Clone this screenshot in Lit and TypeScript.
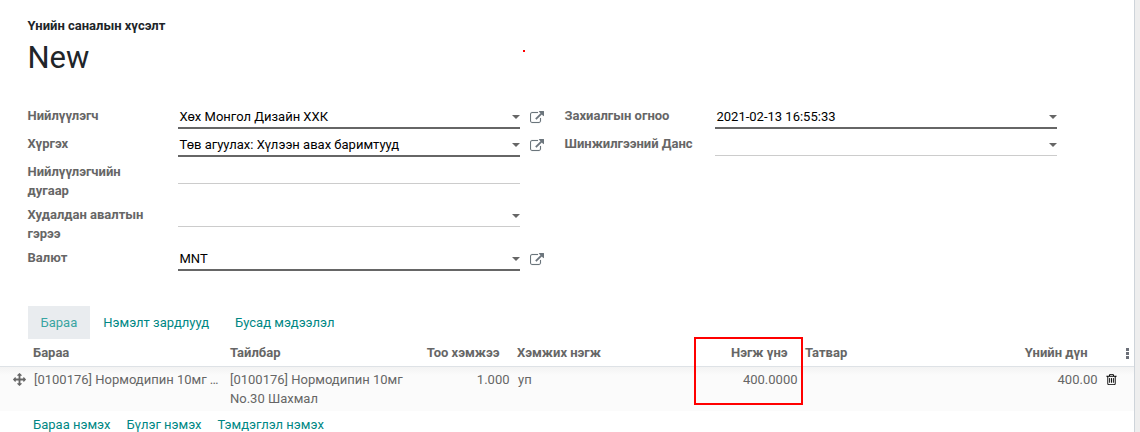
import { LitElement, html, css, svg, nothing } from "lit";
import { customElement, property } from "lit/decorators.js";

const PATHS = {
  external:
    "M1408 928v320q0 119-84.5 203.5t-203.5 84.5h-832q-119 0-203.5-84.5t-84.5-203.5v-832q0-119 84.5-203.5t203.5-84.5h704q14 0 23 9t9 23v64q0 14-9 23t-23 9h-704q-66 0-113 47t-47 113v832q0 66 47 113t113 47h832q66 0 113-47t47-113v-320q0-14 9-23t23-9h64q14 0 23 9t9 23zm384-864v512q0 26-19 45t-45 19-45-19l-176-176-652 652q-10 10-23 10t-23-10l-114-114q-10-10-10-23t10-23l652-652-176-176q-19-19-19-45t19-45 45-19h512q26 0 45 19t19 45z",
  move:
    "M1792 896q0 26-19 45l-256 256q-19 19-45 19t-45-19-19-45v-128h-384v384h128q26 0 45 19t19 45-19 45l-256 256q-19 19-45 19t-45-19l-256-256q-19-19-19-45t19-45 45-19h128v-384h-384v128q0 26-19 45t-45 19-45-19l-256-256q-19-19-19-45t19-45l256-256q19-19 45-19t45 19 19 45v128h384v-384h-128q-26 0-45-19t-19-45 19-45l256-256q19-19 45-19t45 19l256 256q19 19 19 45t-19 45-45 19h-128v384h384v-128q0-26 19-45t45-19 45 19l256 256q19 19 19 45z",
  trash:
    "M704 736v576q0 14-9 23t-23 9h-64q-14 0-23-9t-9-23v-576q0-14 9-23t23-9h64q14 0 23 9t9 23zm256 0v576q0 14-9 23t-23 9h-64q-14 0-23-9t-9-23v-576q0-14 9-23t23-9h64q14 0 23 9t9 23zm256 0v576q0 14-9 23t-23 9h-64q-14 0-23-9t-9-23v-576q0-14 9-23t23-9h64q14 0 23 9t9 23zm128 724v-948h-896v948q0 22 7 40.5t14.5 27 10.5 8.5h832q3 0 10.5-8.5t14.5-27 7-40.5zm-672-1076h448l-48-117q-7-9-17-11h-317q-10 2-17 11zm928 32v64q0 14-9 23t-23 9h-96v948q0 83-47 143.5t-113 60.5h-832q-66 0-113-58.5t-47-141.5v-952h-96q-14 0-23-9t-9-23v-64q0-14 9-23t23-9h309l70-167q15-37 54-63t79-26h320q40 0 79 26t54 63l70 167h309q14 0 23 9t9 23z",
};

const icon = (name: keyof typeof PATHS) =>
  html`<svg class=${name} viewBox="0 0 1792 1792">${svg`<path d=${PATHS[name]} />`}</svg>`;

@customElement("form-field")
class FormField extends LitElement {
  @property() label = "";
  @property() value = "";
  @property({ type: Boolean }) required = false;
  @property({ type: Boolean }) select = false;
  @property({ type: Boolean }) link = false;

  static styles = css`
    :host { display: flex; align-items: flex-start; }
    .label { width: 150.5px; padding-right: 20px; box-sizing: border-box; font-weight: 700; color: #666; line-height: 19px; }
    .input {
      display: flex; width: 342px; height: 22px; box-sizing: border-box;
      padding: 1px 0 0 1.5px; line-height: 19px; color: #000;
      border-bottom: 1px solid #ccc;
    }
    .input.required { height: 23px; border-bottom: 2px solid #666; }
    .text { flex: 1; white-space: nowrap; }
    .caret { width: 0; height: 0; margin-top: 8px; border: 4px solid transparent; border-top-color: #666; border-bottom: 0; }
    .external { width: 14px; height: 14px; margin: 5px 0 0 10px; fill: #6c757d; stroke: #6c757d; stroke-width: 16px; }
  `;

  render() {
    return html`
      <div class="label">${this.label}</div>
      <div class="input ${this.required ? "required" : ""}">
        <span class="text">${this.value}</span>
        ${this.select ? html`<span class="caret"></span>` : nothing}
      </div>
      ${this.link ? icon("external") : nothing}
    `;
  }
}

@customElement("app-root")
class AppRoot extends LitElement {
  static styles = css`
    :host {
      display: block; width: 1140px; height: 432px; overflow: hidden; position: relative;
      background: #eee; font: 13px/19px Roboto, sans-serif; color: #666;
    }
    .sheet { width: 1134px; height: 432px; background: #fff; border-right: 1px solid #ced4da; }
    .heading { height: 106px; padding: 16px 0 0 27.5px; box-sizing: border-box; color: #212529; }
    .subtitle { font-weight: 700; }
    .title { margin: 0; font-size: 31px; line-height: 46px; font-weight: 400; }
    .groups { display: flex; gap: 21px; height: 200px; padding-left: 27.5px; }
    .group { display: grid; width: 516px; align-content: start; grid-template-rows: 28px 28px 43px 43px 28px; }
    .tabs { display: flex; height: 33px; padding-left: 27.5px; }
    .tab { padding: 0 13px; line-height: 34px; color: #008784; }
    .tab.active { background: #e9ecef; color: #3aa5a2; }
    .row { display: grid; grid-template-columns: 28px 197px 187px 100px 178px 110px 200px 100px 22px 12px; }
    .head { height: 28px; box-sizing: border-box; padding-top: 4px; border-bottom: 1px solid #dee2e6; font-weight: 700; white-space: nowrap; }
    .head .cell { padding-left: 5px; }
    .head .num { padding-right: 12.5px; text-align: right; }
    .line { height: 44px; box-sizing: border-box; padding-top: 3px; background: linear-gradient(#f3f3f3, #fbfbfb 8px); }
    .line .cell { padding: 0 6px 0 6px; }
    .line .desc { padding-left: 5px; }
    .line .name { padding-right: 0; white-space: nowrap; }
    .line .num { padding-right: 2.5px; text-align: right; }
    .move { display: block; width: 13px; height: 13px; margin: 3px 0 0 13px; fill: #666; }
    .trash { display: block; width: 13px; height: 13px; margin: 3px 0 0 4.5px; fill: #000; }
    .dots { display: flex; flex-direction: column; gap: 1px; padding: 5px 0 0 3.5px; }
    .dots span { width: 3px; height: 3px; background: #6b6f78; }
    .actions { display: flex; gap: 16px; padding: 4px 0 0 33px; color: #008784; }
    .highlight { position: absolute; left: 694px; top: 337px; width: 109px; height: 68px; box-sizing: border-box; border: 2px solid #f00; }
    .mark { position: absolute; left: 523px; top: 50px; width: 2px; height: 2px; background: #f00; }
  `;

  render() {
    return html`
      <div class="sheet">
        <div class="heading">
          <div class="subtitle">Үнийн саналын хүсэлт</div>
          <h1 class="title">New</h1>
        </div>
        <div class="groups">
          <div class="group">
            <form-field label="Нийлүүлэгч" value="Хөх Монгол Дизайн ХХК" required select link></form-field>
            <form-field label="Хүргэх" value="Төв агуулах: Хүлээн авах баримтууд" required select link></form-field>
            <form-field label="Нийлүүлэгчийн дугаар"></form-field>
            <form-field label="Худалдан авалтын гэрээ" select></form-field>
            <form-field label="Валют" value="MNT" required select link></form-field>
          </div>
          <div class="group">
            <form-field label="Захиалгын огноо" value="2021-02-13 16:55:33" required select></form-field>
            <form-field label="Шинжилгээний Данс" select></form-field>
          </div>
        </div>
        <div class="tabs">
          <div class="tab active">Бараа</div>
          <div class="tab">Нэмэлт зардлууд</div>
          <div class="tab">Бусад мэдээлэл</div>
        </div>
        <div class="row head">
          <div></div>
          <div class="cell">Бараа</div>
          <div class="cell">Тайлбар</div>
          <div class="cell num">Тоо хэмжээ</div>
          <div class="cell">Хэмжих нэгж</div>
          <div class="cell num">Нэгж үнэ</div>
          <div class="cell">Татвар</div>
          <div class="cell num">Үнийн дүн</div>
          <div></div>
          <div class="dots"><span></span><span></span><span></span></div>
        </div>
        <div class="row line">
          <div>${icon("move")}</div>
          <div class="cell name">[0100176] Нормодипин 10мг …</div>
          <div class="cell desc">[0100176] Нормодипин 10мг No.30 Шахмал</div>
          <div class="cell num">1.000</div>
          <div class="cell">уп</div>
          <div class="cell num">400.0000</div>
          <div></div>
          <div class="cell num">400.00</div>
          <div>${icon("trash")}</div>
        </div>
        <div class="actions"><span>Бараа нэмэх</span><span>Бүлэг нэмэх</span><span>Тэмдэглэл нэмэх</span></div>
      </div>
      <div class="highlight"></div>
      <div class="mark"></div>
    `;
  }
}
